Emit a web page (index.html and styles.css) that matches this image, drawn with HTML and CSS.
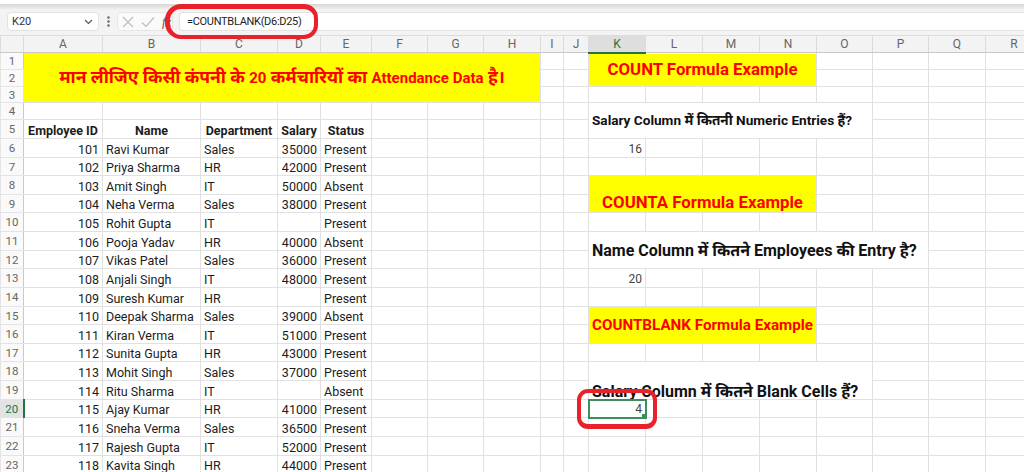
FILE: index.html
```html
<!doctype html>
<html lang="hi">
  <head>
    <meta charset="UTF-8" />
    <meta name="viewport" content="width=device-width, initial-scale=1.0" />
    <title>COUNT, COUNTA, COUNTBLANK</title>
    <link rel="stylesheet" href="styles.css">
  </head>

  <body>
    <div class="ribbon-edge"></div>

    <div class="formula-bar">
      <div class="name-box">
        <span>K20</span>
        <svg width="9" height="6" viewBox="0 0 9 6"><path d="M1 1l3.5 3.5L8 1" fill="none" stroke="#555" stroke-width="1.2"/></svg>
      </div>
      <div class="dots">
        <svg width="3" height="11" viewBox="0 0 3 11"><circle cx="1.5" cy="1.5" r="1.2" fill="#666"/><circle cx="1.5" cy="5.5" r="1.2" fill="#666"/><circle cx="1.5" cy="9.5" r="1.2" fill="#666"/></svg>
      </div>
      <div class="fx-box">
        <svg width="12" height="12" viewBox="0 0 12 12"><path d="M1 1l10 10M11 1L1 11" stroke="#bdbdbd" stroke-width="1.2"/></svg>
        <svg width="14" height="12" viewBox="0 0 14 12"><path d="M1 6.5l4 4L13 1.5" fill="none" stroke="#bdbdbd" stroke-width="1.2"/></svg>
        <span class="fx">fx</span>
      </div>
      <div class="formula-input">=COUNTBLANK(D6:D25)</div>
    </div>

    <div class="sheet">
      <table class="grid">
        <colgroup>
          <col style="width:23px"><col style="width:79px"><col style="width:98px"><col style="width:77px">
          <col style="width:43px"><col style="width:51px"><col style="width:56px"><col style="width:56px">
          <col style="width:57px"><col style="width:23px"><col style="width:25px"><col style="width:57px">
          <col style="width:57px"><col style="width:57px"><col style="width:57px"><col style="width:56px">
          <col style="width:56px"><col style="width:57px"><col style="width:57px">
        </colgroup>
        <thead>
          <tr>
            <th></th><th>A</th><th>B</th><th>C</th><th>D</th><th>E</th><th>F</th><th>G</th><th>H</th>
            <th>I</th><th>J</th><th class="active">K</th><th>L</th><th>M</th><th>N</th><th>O</th><th>P</th><th>Q</th><th>R</th>
          </tr>
        </thead>
        <tbody>
          <tr class="h17">
            <th>1</th>
            <td class="title" colspan="8" rowspan="3">मान लीजिए किसी कंपनी के <span class="lat">20</span> कर्मचारियों का <span class="lat">Attendance Data</span> है।</td>
            <td></td><td></td>
            <td class="band mid" colspan="4" rowspan="2">COUNT Formula Example</td>
            <td></td><td></td><td></td><td></td>
          </tr>
          <tr class="h17">
            <th>2</th>
            <td></td><td></td><td></td><td></td><td></td><td></td>
          </tr>
          <tr class="h16">
            <th>3</th>
            <td></td><td></td><td></td><td></td><td></td><td></td><td></td><td></td><td></td><td></td>
          </tr>
          <tr class="h17">
            <th>4</th>
            <td></td><td></td><td></td><td></td><td></td><td></td><td></td><td></td><td></td><td></td>
            <td class="question q-small mid" colspan="5" rowspan="2">Salary Column में कितनी Numeric Entries हैं?</td>
            <td></td><td></td><td></td>
          </tr>
          <tr class="h19">
            <th>5</th>
            <td class="hd">Employee ID</td><td class="hd">Name</td><td class="hd">Department</td><td class="hd">Salary</td><td class="hd">Status</td>
            <td></td><td></td><td></td><td></td><td></td>
            <td></td><td></td><td></td>
          </tr>
          <tr class="h19">
            <th>6</th>
            <td class="num">101</td><td>Ravi Kumar</td><td>Sales</td><td class="num">35000</td><td>Present</td>
            <td></td><td></td><td></td><td></td><td></td>
            <td class="num result">16</td><td></td><td></td><td></td><td></td><td></td><td></td><td></td>
          </tr>
          <tr class="h18">
            <th>7</th>
            <td class="num">102</td><td>Priya Sharma</td><td>HR</td><td class="num">42000</td><td>Present</td>
            <td></td><td></td><td></td><td></td><td></td><td></td><td></td><td></td><td></td><td></td><td></td><td></td><td></td>
          </tr>
          <tr class="h19">
            <th>8</th>
            <td class="num">103</td><td>Amit Singh</td><td>IT</td><td class="num">50000</td><td>Absent</td>
            <td></td><td></td><td></td><td></td><td></td>
            <td class="band band-low" colspan="4" rowspan="2">COUNTA Formula Example</td>
            <td></td><td></td><td></td><td></td>
          </tr>
          <tr class="h18">
            <th>9</th>
            <td class="num">104</td><td>Neha Verma</td><td>Sales</td><td class="num">38000</td><td>Present</td>
            <td></td><td></td><td></td><td></td><td></td>
            <td></td><td></td><td></td><td></td>
          </tr>
          <tr class="h19">
            <th>10</th>
            <td class="num">105</td><td>Rohit Gupta</td><td>IT</td><td class="num"></td><td>Present</td>
            <td></td><td></td><td></td><td></td><td></td><td></td><td></td><td></td><td></td><td></td><td></td><td></td><td></td>
          </tr>
          <tr class="h19">
            <th>11</th>
            <td class="num">106</td><td>Pooja Yadav</td><td>HR</td><td class="num">40000</td><td>Absent</td>
            <td></td><td></td><td></td><td></td><td></td>
            <td class="question mid" colspan="6" rowspan="2">Name Column में कितने Employees की Entry है?</td>
            <td></td><td></td>
          </tr>
          <tr class="h18">
            <th>12</th>
            <td class="num">107</td><td>Vikas Patel</td><td>Sales</td><td class="num">36000</td><td>Present</td>
            <td></td><td></td><td></td><td></td><td></td>
            <td></td><td></td>
          </tr>
          <tr class="h19">
            <th>13</th>
            <td class="num">108</td><td>Anjali Singh</td><td>IT</td><td class="num">48000</td><td>Present</td>
            <td></td><td></td><td></td><td></td><td></td>
            <td class="num result">20</td><td></td><td></td><td></td><td></td><td></td><td></td><td></td>
          </tr>
          <tr class="h19">
            <th>14</th>
            <td class="num">109</td><td>Suresh Kumar</td><td>HR</td><td class="num"></td><td>Present</td>
            <td></td><td></td><td></td><td></td><td></td><td></td><td></td><td></td><td></td><td></td><td></td><td></td><td></td>
          </tr>
          <tr class="h18">
            <th>15</th>
            <td class="num">110</td><td>Deepak Sharma</td><td>Sales</td><td class="num">39000</td><td>Absent</td>
            <td></td><td></td><td></td><td></td><td></td>
            <td class="band band-small mid" colspan="4" rowspan="2">COUNTBLANK Formula Example</td>
            <td></td><td></td><td></td><td></td>
          </tr>
          <tr class="h19">
            <th>16</th>
            <td class="num">111</td><td>Kiran Verma</td><td>IT</td><td class="num">51000</td><td>Present</td>
            <td></td><td></td><td></td><td></td><td></td>
            <td></td><td></td><td></td><td></td>
          </tr>
          <tr class="h18">
            <th>17</th>
            <td class="num">112</td><td>Sunita Gupta</td><td>HR</td><td class="num">43000</td><td>Present</td>
            <td></td><td></td><td></td><td></td><td></td><td></td><td></td><td></td><td></td><td></td><td></td><td></td><td></td>
          </tr>
          <tr class="h19">
            <th>18</th>
            <td class="num">113</td><td>Mohit Singh</td><td>Sales</td><td class="num">37000</td><td>Present</td>
            <td></td><td></td><td></td><td></td><td></td>
            <td class="question" colspan="5" rowspan="2">Salary Column में कितने Blank Cells हैं?</td>
            <td></td><td></td><td></td>
          </tr>
          <tr class="h19">
            <th>19</th>
            <td class="num">114</td><td>Ritu Sharma</td><td>IT</td><td class="num"></td><td>Absent</td>
            <td></td><td></td><td></td><td></td><td></td>
            <td></td><td></td><td></td>
          </tr>
          <tr class="h18">
            <th class="active-row">20</th>
            <td class="num">115</td><td>Ajay Kumar</td><td>HR</td><td class="num">41000</td><td>Present</td>
            <td></td><td></td><td></td><td></td><td></td>
            <td class="num result selected">4</td><td></td><td></td><td></td><td></td><td></td><td></td><td></td>
          </tr>
          <tr class="h19">
            <th>21</th>
            <td class="num">116</td><td>Sneha Verma</td><td>Sales</td><td class="num">36500</td><td>Present</td>
            <td></td><td></td><td></td><td></td><td></td><td></td><td></td><td></td><td></td><td></td><td></td><td></td><td></td>
          </tr>
          <tr class="h19">
            <th>22</th>
            <td class="num">117</td><td>Rajesh Gupta</td><td>IT</td><td class="num">52000</td><td>Present</td>
            <td></td><td></td><td></td><td></td><td></td><td></td><td></td><td></td><td></td><td></td><td></td><td></td><td></td>
          </tr>
          <tr class="h18">
            <th>23</th>
            <td class="num">118</td><td>Kavita Singh</td><td>HR</td><td class="num">44000</td><td>Present</td>
            <td></td><td></td><td></td><td></td><td></td><td></td><td></td><td></td><td></td><td></td><td></td><td></td><td></td>
          </tr>
        </tbody>
      </table>
    </div>

    <!-- hand drawn red marks over the screenshot -->
    <div class="mark mark-formula"></div>
    <div class="mark mark-cell"></div>
  </body>
</html>
```

FILE: styles.css
```css
* {
  box-sizing: border-box;
}

body {
  position: relative;
  width: 1024px;
  height: 472px;
  margin: 0;
  overflow: hidden;
  background: #fff;
  font-family: "Roboto", "Noto Sans Devanagari", "Noto Sans", sans-serif;
  color: #1c1c1c;
}

.ribbon-edge {
  height: 10px;
  background: linear-gradient(#fff 0, #fff 4px, #d6d6d6 4px, #f3f3f3 10px);
}

.formula-bar {
  display: flex;
  align-items: flex-start;
  height: 25px;
  padding: 2px 0 0 7px;
  background: #f3f3f3;
  font-size: 11px;
}

.name-box {
  display: flex;
  align-items: center;
  justify-content: space-between;
  width: 92px;
  height: 19px;
  padding: 0 5px 0 4px;
  background: #fff;
  border: 1px solid #e2e2e2;
  border-radius: 4px;
  color: #333;
}

.dots {
  display: flex;
  align-items: center;
  justify-content: center;
  width: 18px;
  height: 19px;
}

.fx-box {
  display: flex;
  align-items: center;
  gap: 7px;
  width: 56px;
  height: 19px;
  padding-left: 4px;
  background: #fafafa;
  border: 1px solid #e6e6e6;
  border-radius: 4px;
}

.fx {
  font-family: "Liberation Serif", serif;
  font-style: italic;
  font-size: 13px;
  color: #555;
}

.formula-input {
  flex: 1;
  height: 19px;
  margin-left: 6px;
  padding-left: 7px;
  background: #fff;
  border: 1px solid #e2e2e2;
  border-right: none;
  border-radius: 4px 0 0 4px;
  line-height: 17px;
  letter-spacing: -0.3px;
  color: #222;
}

/* sheet */

.grid {
  width: 1042px;
  table-layout: fixed;
  border-collapse: collapse;
  font-size: 12.5px;
}

.grid td {
  padding: 0 3px;
  border: 1px solid #e1e1e1;
  white-space: nowrap;
  overflow: hidden;
  vertical-align: bottom;
  line-height: 15px;
}

.grid thead tr {
  height: 17px;
}

.grid thead th {
  padding: 0;
  background: #f3f3f3;
  border: 1px solid #dcdcdc;
  border-bottom-color: #c8c8c8;
  font-weight: normal;
  font-size: 12px;
  color: #666;
}

.grid thead th.active {
  background: #dedede;
  border-bottom: 2px solid #217346;
  color: #217346;
}

.grid tbody th {
  padding: 0;
  background: #fafafa;
  border: 1px solid #e4e4e4;
  border-right-color: #cacaca;
  font-weight: normal;
  font-size: 11.5px;
  color: #666;
}

.grid tbody th.active-row {
  background: #e3e3e3;
  border-right: 2px solid #217346;
  color: #217346;
}

.h16 { height: 16px; }
.h17 { height: 17px; }
.h18 { height: 18px; }
.h19 { height: 19px; }

.num {
  text-align: right;
}

.hd {
  text-align: center;
  font-weight: bold;
}

.title {
  background: #ffff00;
  color: #ff0000;
  font-weight: bold;
  font-size: 17.5px;
  text-align: center;
  vertical-align: middle !important;
}

.title .lat {
  font-size: 15px;
}

.band {
  background: #ffff00;
  color: #ff0000;
  font-weight: bold;
  font-size: 16.8px;
  text-align: center;
}

.band-low {
  padding-bottom: 2px !important;
}

.band-small {
  font-size: 15.2px;
}

.mid {
  vertical-align: middle !important;
}

.question {
  font-weight: bold;
  font-size: 16px;
  color: #111;
  background: #fff;
}

.q-small {
  font-size: 13.6px;
}

.result {
  font-size: 12px;
  color: #444;
}

.selected {
  position: relative;
  outline: 2px solid #3f8c5c;
  outline-offset: -1px;
}

.selected::after {
  content: "";
  position: absolute;
  right: -3px;
  bottom: -3px;
  width: 5px;
  height: 5px;
  background: #3f8c5c;
  border: 1px solid #fff;
}

.mark {
  position: absolute;
  border: 4px solid #e8212b;
  pointer-events: none;
}

.mark-formula {
  left: 165px;
  top: 4px;
  width: 153px;
  height: 35px;
  border-width: 5px 4px 4px 5px;
  border-radius: 16px 14px 14px 16px;
}

.mark-cell {
  left: 577px;
  top: 389px;
  width: 80px;
  height: 40px;
  border-width: 4px 4px 5px 4px;
  border-radius: 11px;
}
```
